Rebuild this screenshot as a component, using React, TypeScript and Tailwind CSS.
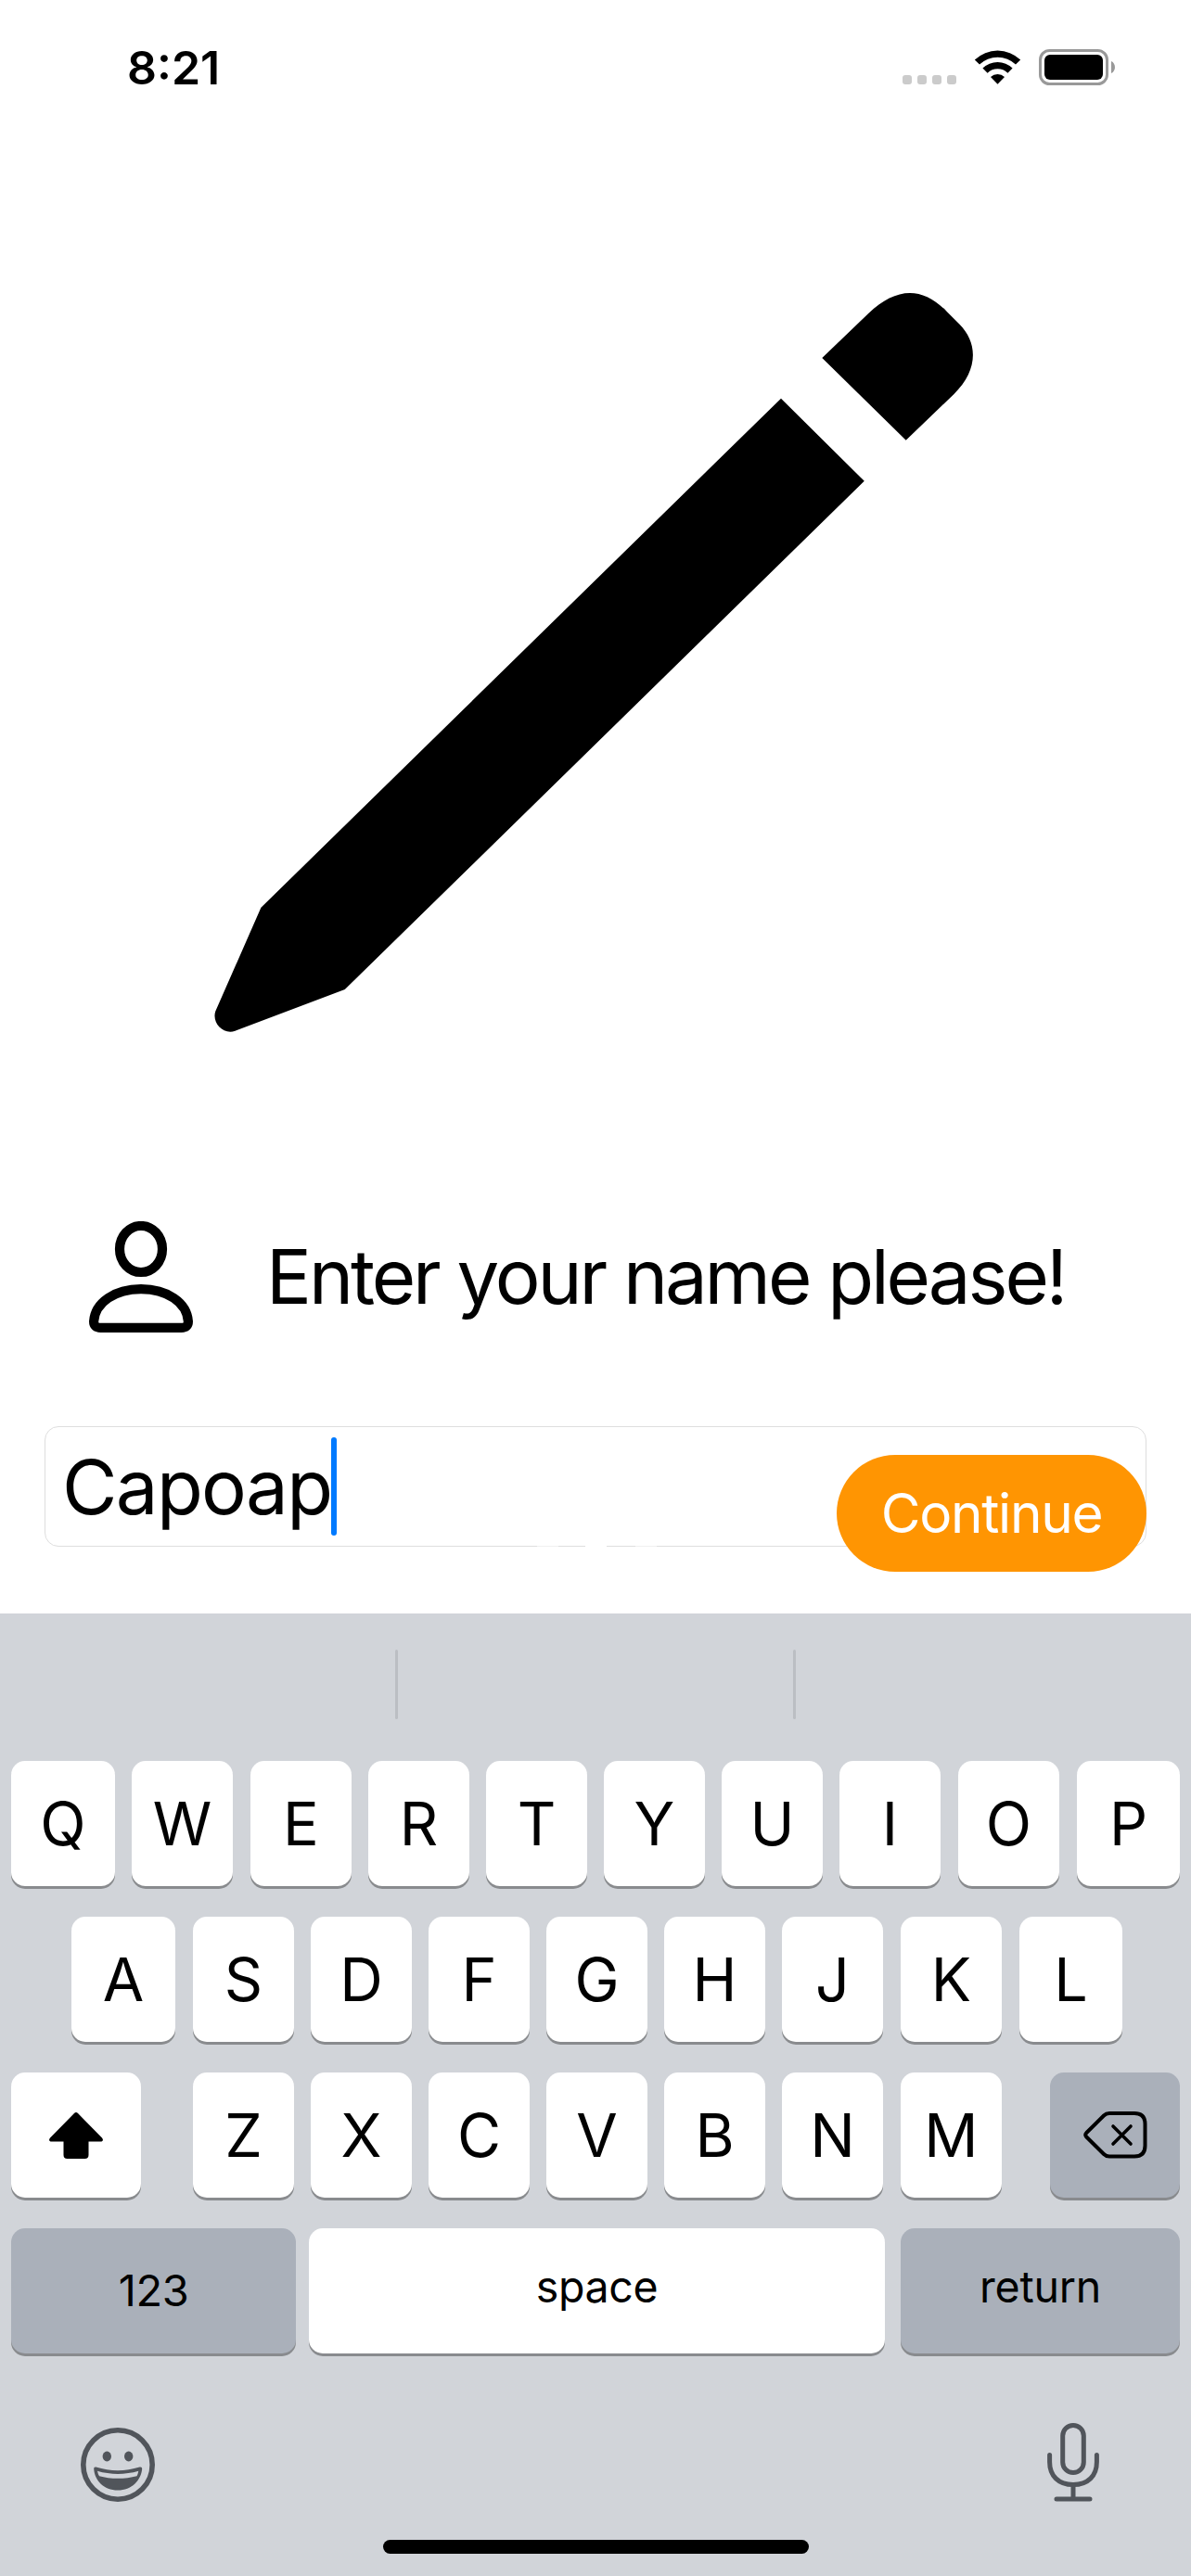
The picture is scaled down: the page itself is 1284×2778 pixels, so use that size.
import type { ReactNode } from "react";

const KEY =
  "flex h-[135px] shrink-0 items-center justify-center rounded-[15px] shadow-[0_3px_0_#898b8e]";
const DARK = "bg-[#aab0ba]";

function Key({ className, children }: { className: string; children: ReactNode }) {
  return <div className={`${KEY} ${className}`}>{children}</div>;
}

const WIDTHS = { 109: "w-[109px]", 111: "w-[111px]", 112: "w-[112px]" };
const GAPS = { 0: "", 18: "ml-[18px]", 19: "ml-[19px]" };

function Letter({
  char,
  width = 109,
  gap = 0,
}: {
  char: string;
  width?: keyof typeof WIDTHS;
  gap?: keyof typeof GAPS;
}) {
  return (
    <Key className={`bg-white ${WIDTHS[width]} ${GAPS[gap]} text-[64.5px] leading-none`}>
      <span className="relative top-px">{char}</span>
    </Key>
  );
}

function StatusBar() {
  return (
    <header className="flex h-[132px] shrink-0 items-start">
      <div className="ml-[137px] mt-[43px] w-[140px] text-[50px] font-semibold leading-[60px]">
        8:21
      </div>
      <div className="ml-auto mr-[82px] mt-[53px] flex">
        <div className="mt-[28px] flex gap-[6px]">
          {[0, 1, 2, 3].map((i) => (
            <span key={i} className="h-[10px] w-[10px] rounded-[3px] bg-[#cbcbcb]" />
          ))}
        </div>
        <svg className="ml-[19px] mt-[1px] h-[37px] w-[51px]" viewBox="0 0 51 37">
          <path d="M0.8 10.6 A35.5 35.5 0 0 1 50.2 10.6 L45 15.6 A28 28 0 0 0 6 15.6 Z" />
          <path d="M9.4 19.6 A23 23 0 0 1 41.6 19.6 L36.4 24.8 A15.6 15.6 0 0 0 14.6 24.8 Z" />
          <path d="M18 29 A11 11 0 0 1 33 29 L25.5 36.8 Z" />
        </svg>
        <svg className="ml-[19px] h-[39px] w-[82px]" viewBox="0 0 82 39">
          <rect x="1.5" y="1.5" width="72" height="36" rx="10" fill="none" stroke="#999" strokeWidth="3" />
          <rect x="6" y="6" width="63" height="27" rx="6" />
          <path d="M78 13 C83.3 15.2 83.3 23.8 78 26 Z" fill="#999" />
        </svg>
      </div>
    </header>
  );
}

function Pencil() {
  return (
    <svg className="ml-[230px] mt-[183px] h-[800px] w-[820px] shrink-0" viewBox="230 315 820 800">
      <path d="M842 429.7 L931.8 518.8 L371.8 1067 L253.5 1111.7 C241 1116.5 228 1103 232.3 1090.5 L281.4 978.8 Z" />
      <path d="M886.3 386 L936 338.2 C966 309.5 994 308.5 1020.5 335.7 L1034 349.3 C1055.5 370.5 1053.8 400.5 1028.5 425 L976.7 474.8 Z" />
    </svg>
  );
}

function Person() {
  return (
    <svg className="h-[120px] w-[112px]" viewBox="96 1317 112 120" fill="none" stroke="black" strokeWidth="10.2">
      <ellipse cx="152" cy="1347" rx="23" ry="25" />
      <path d="M108.5 1431.9 C103.5 1431.9 101.1 1429.5 101.1 1425 C102.5 1404.5 124 1390.1 152 1390.1 C180 1390.1 201.5 1404.5 202.900 1425 C202.9 1429.5 200.5 1431.9 195.5 1431.9 Z" />
    </svg>
  );
}

function ShiftIcon() {
  return (
    <svg className="h-[50px] w-[58px]" viewBox="0 0 58 50">
      <path d="M27 1.1 Q29 -0.9 31 1.1 L57 27.5 C59 30 57.5 31.5 55.5 31.5 H42.5 V46 Q42.5 50 38.5 50 H19.5 Q15.5 50 15.5 46 V31.5 H2.5 C0.5 31.5 -1 30 1 27.5 Z" />
    </svg>
  );
}

function DeleteIcon() {
  return (
    <svg className="h-[51px] w-[69px]" viewBox="0 0 69 51" fill="none" stroke="black" strokeWidth="4" strokeLinecap="round" strokeLinejoin="round">
      <path d="M28 2 H55 Q66.5 2 66.5 13.5 V37 Q66.5 48.5 55 48.5 H28 Q24.5 48.5 22 46 L3.3 27.5 Q1.2 25.3 3.3 23 L22 4.5 Q24.5 2 28 2 Z" />
      <path d="M32 16 L51 35 M51 16 L32 35" strokeWidth="3.6" />
    </svg>
  );
}

function EmojiIcon() {
  return (
    <svg className="h-[80px] w-[80px]" viewBox="0 0 80 80">
      <circle cx="40" cy="40" r="37.2" fill="none" stroke="#51555b" strokeWidth="5.6" />
      <ellipse cx="28.3" cy="31" rx="4.7" ry="5.4" fill="#51555b" />
      <ellipse cx="51.7" cy="31" rx="4.7" ry="5.4" fill="#51555b" />
      <path d="M16.5 42.6 Q14 42 14.2 44.6 C15 57 25 67.6 40 67.6 C55 67.6 65 57 66.2 44.600 Q66.4 42 63.5 42.6 C48 47.4 32 47.4 16.5 42.6 Z" fill="#51555b" />
      <path d="M18 46.8 C32 51 48 51 62.3 46.8 Q61.8 50 60.5 52.3 C48 55.7 32 55.7 20 52.3 Q18.5 50 18 46.8 Z" fill="#d1d4d9" />
    </svg>
  );
}

function MicIcon() {
  return (
    <svg className="h-[85px] w-[56px]" viewBox="0 0 56 85" fill="none" stroke="#51555b" strokeWidth="5" strokeLinecap="round">
      <rect x="16.7" y="2.5" width="22.6" height="51" rx="11.3" />
      <path d="M2.6 34.5 V42 C2.6 57 12 66.5 28 66.5 C44 66.5 53.4 57 53.4 42 V34.5" />
      <path d="M28 67 V81 M10 82 H46" />
    </svg>
  );
}

function Keyboard() {
  return (
    <section className="flex h-[1038px] shrink-0 flex-col bg-[#d1d4d9]">
      <div className="flex h-[159px] shrink-0 pt-[39px]">
        <span className="ml-[426px] h-[75px] w-[3px] rounded-full bg-[#bbbec3]" />
        <span className="ml-[426px] h-[75px] w-[3px] rounded-full bg-[#bbbec3]" />
      </div>
      <div className="flex flex-col gap-[33px]">
        <div className="flex pl-[12px]">
          <Letter char="Q" width={112} />
          <Letter char="W" gap={18} />
          <Letter char="E" gap={19} />
          <Letter char="R" gap={18} />
          <Letter char="T" gap={18} />
          <Letter char="Y" gap={18} />
          <Letter char="U" gap={18} />
          <Letter char="I" gap={18} />
          <Letter char="O" gap={19} />
          <Letter char="P" width={111} gap={19} />
        </div>
        <div className="flex pl-[77px]">
          <Letter char="A" width={112} />
          <Letter char="S" gap={19} />
          <Letter char="D" gap={18} />
          <Letter char="F" gap={18} />
          <Letter char="G" gap={18} />
          <Letter char="H" gap={18} />
          <Letter char="J" gap={18} />
          <Letter char="K" gap={19} />
          <Letter char="L" width={111} gap={19} />
        </div>
        <div className="flex pl-[12px]">
          <Key className="mr-[56px] w-[140px] bg-white">
            <ShiftIcon />
          </Key>
          <Letter char="Z" />
          <Letter char="X" gap={18} />
          <Letter char="C" gap={18} />
          <Letter char="V" gap={18} />
          <Letter char="B" gap={18} />
          <Letter char="N" gap={18} />
          <Letter char="M" gap={19} />
          <Key className={`${DARK} ml-[52px] w-[140px]`}>
            <DeleteIcon />
          </Key>
        </div>
        <div className="flex pl-[12px] text-[46.5px] leading-none">
          <Key className={`${DARK} w-[307px]`}>
            <span className="relative -top-px text-[47px] tracking-[-0.4px]">123</span>
          </Key>
          <Key className="ml-[14px] w-[621px] bg-white">
            <span className="relative -top-[4px] tracking-[-0.4px]">space</span>
          </Key>
          <Key className={`${DARK} ml-[17px] w-[301px]`}>
            <span className="relative -top-[4px] tracking-[-0.2px]">return</span>
          </Key>
        </div>
      </div>
      <div className="flex justify-between pl-[87px] pr-[99px] pt-[75px]">
        <div className="pt-[5px]">
          <EmojiIcon />
        </div>
        <MicIcon />
      </div>
      <div className="mb-[24px] ml-[413px] mt-auto h-[15px] w-[459px] rounded-full bg-black" />
    </section>
  );
}

export default function App() {
  return (
    <main className="flex h-[2778px] w-[1284px] flex-col overflow-hidden bg-white font-['Inter',sans-serif] text-black">
      <StatusBar />
      <Pencil />
      <div className="ml-[96px] mt-[202px] flex h-[120px] shrink-0">
        <Person />
        <h1 className="ml-[79px] mt-[7px] whitespace-nowrap text-[81.5px] font-normal leading-[106px] tracking-[-3.1px]">
          Enter your name please!
        </h1>
      </div>
      <div className="relative mx-[48px] mt-[101px] flex h-[130px] shrink-0 items-center rounded-[15px] border border-[#dedede] pl-[18px]">
        <span className="relative top-px text-[81.5px] leading-[106px] tracking-[-1.7px]">Capoap</span>
        <span className="absolute left-[308px] top-[11px] h-[106px] w-[6px] rounded-full bg-[#007aff]" />
        <span className="absolute -bottom-px left-[530px] h-px w-[23px] bg-[#f0f0f0]" />
        <span className="absolute -bottom-px left-[582px] h-px w-[23px] bg-white" />
        <span className="absolute -bottom-px left-[636px] h-px w-[23px] bg-[#f0f0f0]" />
        <button className="absolute -right-px top-[30px] h-[126px] w-[334px] rounded-full bg-[#ff9502] text-[58.5px] leading-none tracking-[-1.3px] text-white">
          Continue
        </button>
      </div>
      <div className="mt-auto">
        <Keyboard />
      </div>
    </main>
  );
}
